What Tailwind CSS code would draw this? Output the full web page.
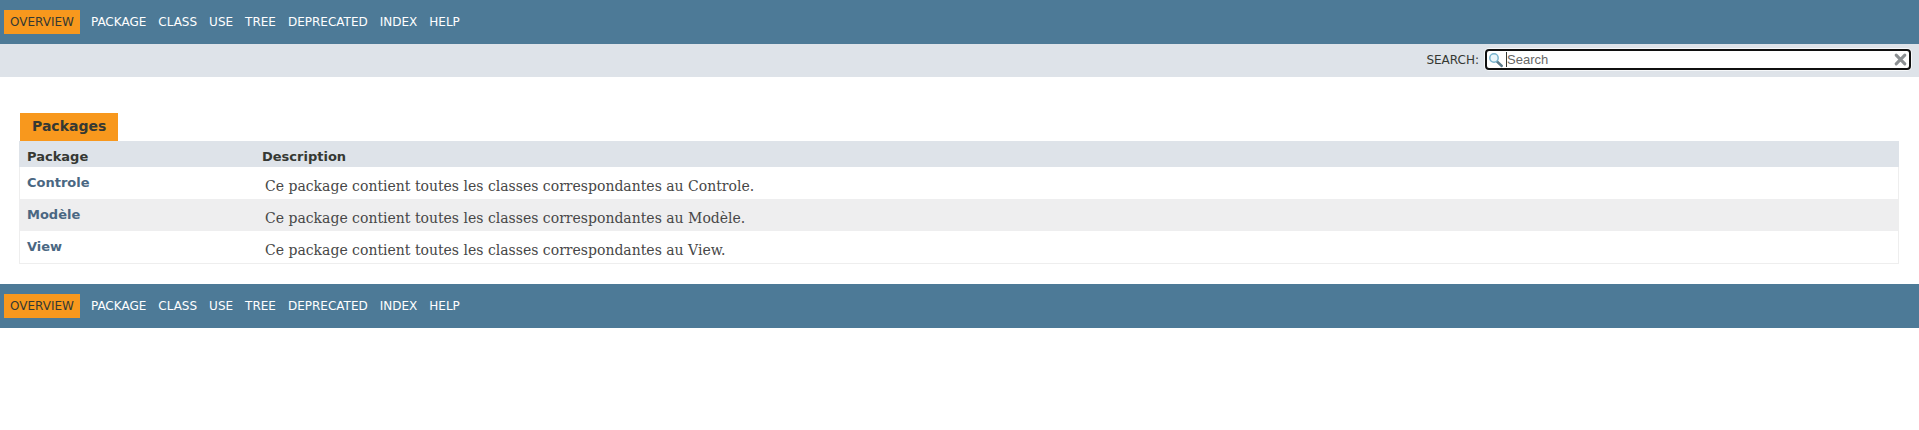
<!DOCTYPE html>
<html lang="fr">
<head>
<meta charset="utf-8">
<title>Overview</title>
<script src="https://cdn.jsdelivr.net/npm/@tailwindcss/browser@4"></script>
</head>
<body class="bg-white font-['DejaVu_Sans',sans-serif] text-sm text-[#353833]">
<header>
  <nav class="flex h-11 items-center bg-[#4D7A97] pl-1 text-xs text-white">
    <span class="mr-[5px] flex h-6 items-center bg-[#F8981D] px-1.5 text-[#353833]">OVERVIEW</span>
    <a class="px-1.5">PACKAGE</a><a class="px-1.5">CLASS</a><a class="px-1.5">USE</a><a class="px-1.5">TREE</a><a class="px-1.5">DEPRECATED</a><a class="px-1.5">INDEX</a><a class="px-1.5">HELP</a>
  </nav>
  <div class="flex h-[33px] items-start justify-end bg-[#dee3e9] pt-[5px] pr-2 text-xs">
    <label class="mr-1.5 pt-[3px] leading-4">SEARCH:</label>
    <div class="flex h-[21px] w-[426px] items-center rounded-[4px] border-2 border-[#101010] bg-white pr-[2px] pl-px shadow-[0_0_0_1px_#f5f7f9]">
      <svg class="size-4 shrink-0" viewBox="0 0 16 16" fill="none">
        <path d="M9 9.5L13.8 14" stroke="#5c7c8c" stroke-width="2.4" stroke-linecap="round"/>
        <circle cx="6" cy="6" r="4.2" fill="#eaf6fb" stroke="#79b4cf" stroke-width="1.5"/>
      </svg>
      <span class="ml-[2px] h-[15px] w-px bg-[#353833]"></span>
      <span class="grow pt-px font-['Liberation_Sans',sans-serif] text-[13px] leading-4 text-[#666]">Search</span>
      <svg class="size-[13px] shrink-0" viewBox="0 0 12 12"><path d="M2 2L10 10M10 2L2 10" stroke="#8b8f92" stroke-width="2.8" stroke-linecap="round"/></svg>
    </div>
  </div>
</header>
<main class="pt-9 pr-[19px] pb-5 pl-[19px]">
  <div class="ml-px flex h-7 w-[98px] items-center bg-[#F8981D] pb-0.5 pl-3 font-bold text-[#353833]">Packages</div>
  <div class="w-[1880px] border-x border-b border-[#eee] text-[13px]">
    <div class="-mx-px grid h-[26px] grid-cols-[235px_1fr] bg-[#dee3e9] pt-2 pl-2 leading-4 font-bold"><span>Package</span><span>Description</span></div>
    <div class="grid h-8 grid-cols-[238px_1fr] pl-[7px]"><a class="pt-2 leading-4 font-bold text-[#4A6782]">Controle</a><span class="pt-[11px] font-['DejaVu_Serif',serif] text-sm leading-4 text-[#474747]">Ce package contient toutes les classes correspondantes au Controle.</span></div>
    <div class="-ml-px grid h-8 grid-cols-[238px_1fr] bg-[#eeeeef] pl-2"><a class="pt-2 leading-4 font-bold text-[#4A6782]">Modèle</a><span class="pt-[11px] font-['DejaVu_Serif',serif] text-sm leading-4 text-[#474747]">Ce package contient toutes les classes correspondantes au Modèle.</span></div>
    <div class="grid h-8 grid-cols-[238px_1fr] pl-[7px]"><a class="pt-2 leading-4 font-bold text-[#4A6782]">View</a><span class="pt-[11px] font-['DejaVu_Serif',serif] text-sm leading-4 text-[#474747]">Ce package contient toutes les classes correspondantes au View.</span></div>
  </div>
</main>
<footer>
  <nav class="flex h-11 items-center bg-[#4D7A97] pl-1 text-xs text-white">
    <span class="mr-[5px] flex h-6 items-center bg-[#F8981D] px-1.5 text-[#353833]">OVERVIEW</span>
    <a class="px-1.5">PACKAGE</a><a class="px-1.5">CLASS</a><a class="px-1.5">USE</a><a class="px-1.5">TREE</a><a class="px-1.5">DEPRECATED</a><a class="px-1.5">INDEX</a><a class="px-1.5">HELP</a>
  </nav>
</footer>
</body>
</html>
